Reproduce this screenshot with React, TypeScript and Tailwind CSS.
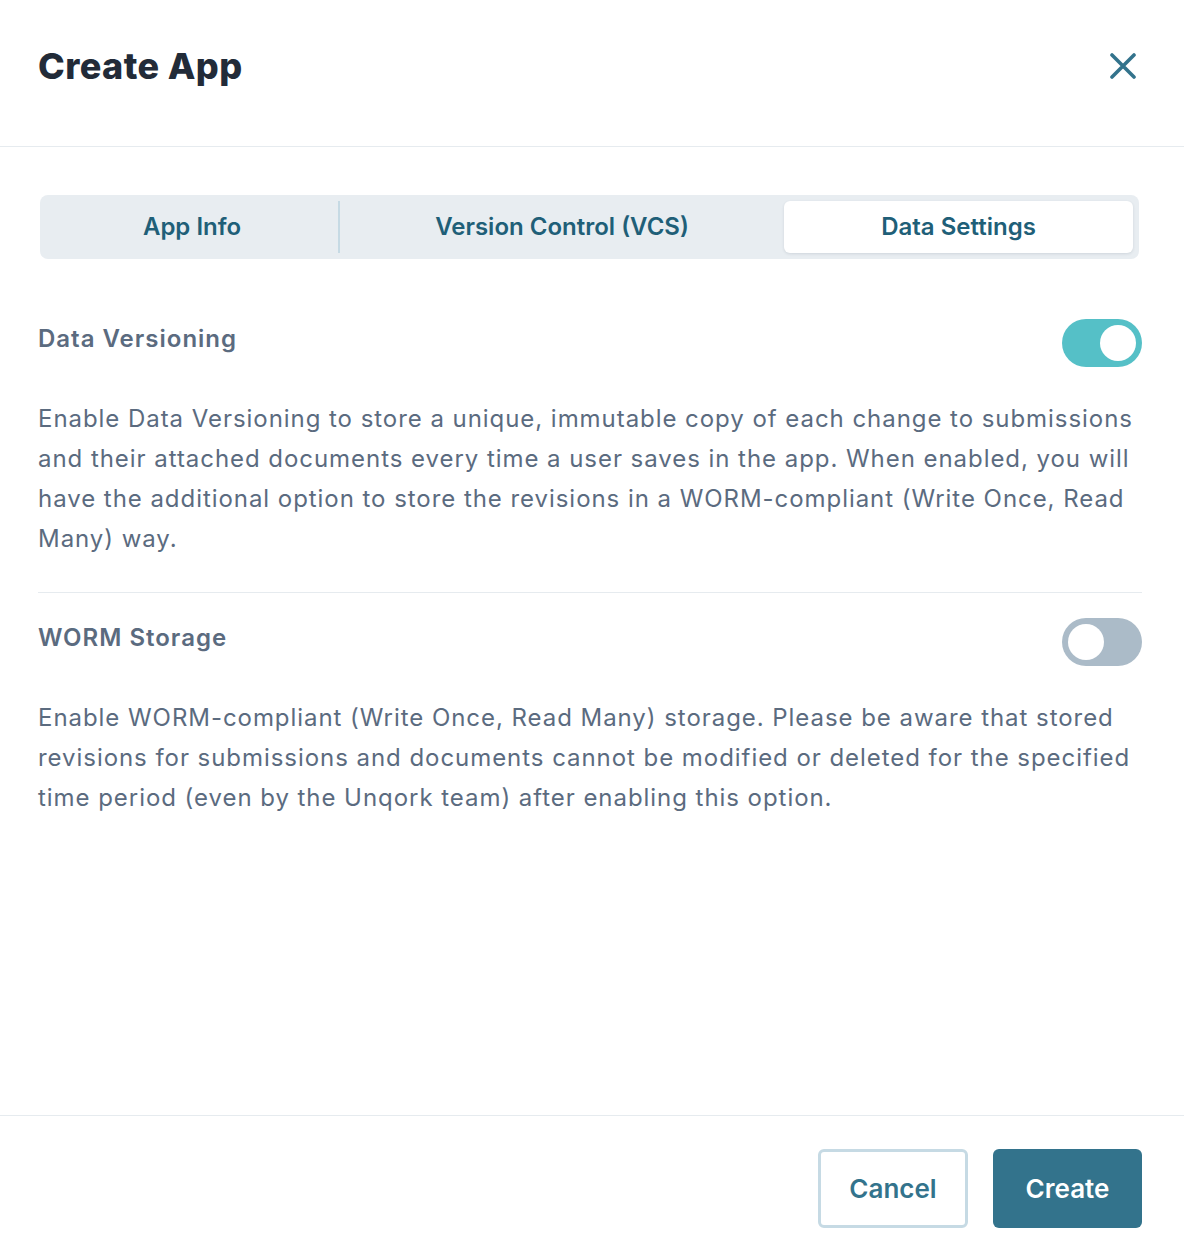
import React from "react";

function Toggle({ on }: { on: boolean }) {
  return (
    <div
      className={
        "flex h-[48px] w-[80px] shrink-0 items-center rounded-full px-[6px] " +
        (on ? "justify-end bg-[#55c0c7]" : "justify-start bg-[#abbbc8]")
      }
    >
      <div className="h-[36px] w-[36px] rounded-full bg-white" />
    </div>
  );
}

export default function App() {
  return (
    <div
      className="flex h-[1256px] w-[1184px] flex-col bg-white"
      style={{ fontFamily: "Inter, 'Noto Sans', sans-serif" }}
    >
      <header className="flex h-[147px] shrink-0 items-center justify-between border-b border-[#e6ebef] pb-[14px] pl-[38px] pr-[48px]">
        <h1 className="text-[36px] font-extrabold leading-none tracking-[0.4px] text-[#222b38]">
          Create App
        </h1>
        <svg width="26" height="26" viewBox="0 0 26 26" fill="none">
          <path d="M2 2L24 24M24 2L2 24" stroke="#33738c" strokeWidth="3.6" strokeLinecap="round" />
        </svg>
      </header>

      <main className="flex flex-1 flex-col pl-[38px] pr-[42px] pt-[48px]">
        <div className="ml-[2px] mr-[3px] flex h-[64px] items-center rounded-[8px] bg-[#e8edf1] p-[6px] text-[24px] font-semibold text-[#1f5f78]">
          <div className="flex h-full w-[292px] items-center justify-center">App Info</div>
          <div className="h-full w-[2px] bg-[#c6dae4]" />
          <div className="flex h-full w-[444px] items-center justify-center">Version Control (VCS)</div>
          <div className="flex h-full flex-1 items-center justify-center rounded-[6px] bg-white shadow-[0_1px_3px_rgba(30,50,70,0.12)]">
            Data Settings
          </div>
        </div>

        <section className="mt-[60px]">
          <div className="flex items-start justify-between">
            <h2 className="text-[24px] font-semibold leading-[40px] tracking-[1px] text-[#5b6b7f]">Data Versioning</h2>
            <Toggle on />
          </div>
          <p className="mt-[32px] text-[24px] leading-[40px] tracking-[0.95px] text-[#5b6b7f]">
            Enable Data Versioning to store a unique, immutable copy of each change to submissions and their attached documents every time a user saves in the app. When enabled, you will have the additional option to store the revisions in a WORM-compliant (Write Once, Read Many) way.
          </p>
        </section>

        <div className="mt-[33px] h-px bg-[#e6ebef]" />

        <section className="mt-[25px]">
          <div className="flex items-start justify-between">
            <h2 className="text-[24px] font-semibold leading-[40px] tracking-[1px] text-[#5b6b7f]">WORM Storage</h2>
            <Toggle on={false} />
          </div>
          <p className="mt-[32px] text-[24px] leading-[40px] tracking-[0.95px] text-[#5b6b7f]">
            Enable WORM-compliant (Write Once, Read Many) storage. Please be aware that stored revisions for submissions and documents cannot be modified or deleted for the specified time period (even by the Unqork team) after enabling this option.
          </p>
        </section>
      </main>

      <footer className="flex shrink-0 justify-end gap-[25px] border-t border-[#e6ebef] pb-[28px] pl-[38px] pr-[42px] pt-[33px]">
        <button className="h-[79px] w-[150px] rounded-[6px] border-[3px] border-[#c6dae4] bg-white text-[26px] font-semibold text-[#33738c]">
          Cancel
        </button>
        <button className="h-[79px] w-[149px] rounded-[6px] bg-[#33738c] text-[26px] font-semibold text-white">
          Create
        </button>
      </footer>
    </div>
  );
}
